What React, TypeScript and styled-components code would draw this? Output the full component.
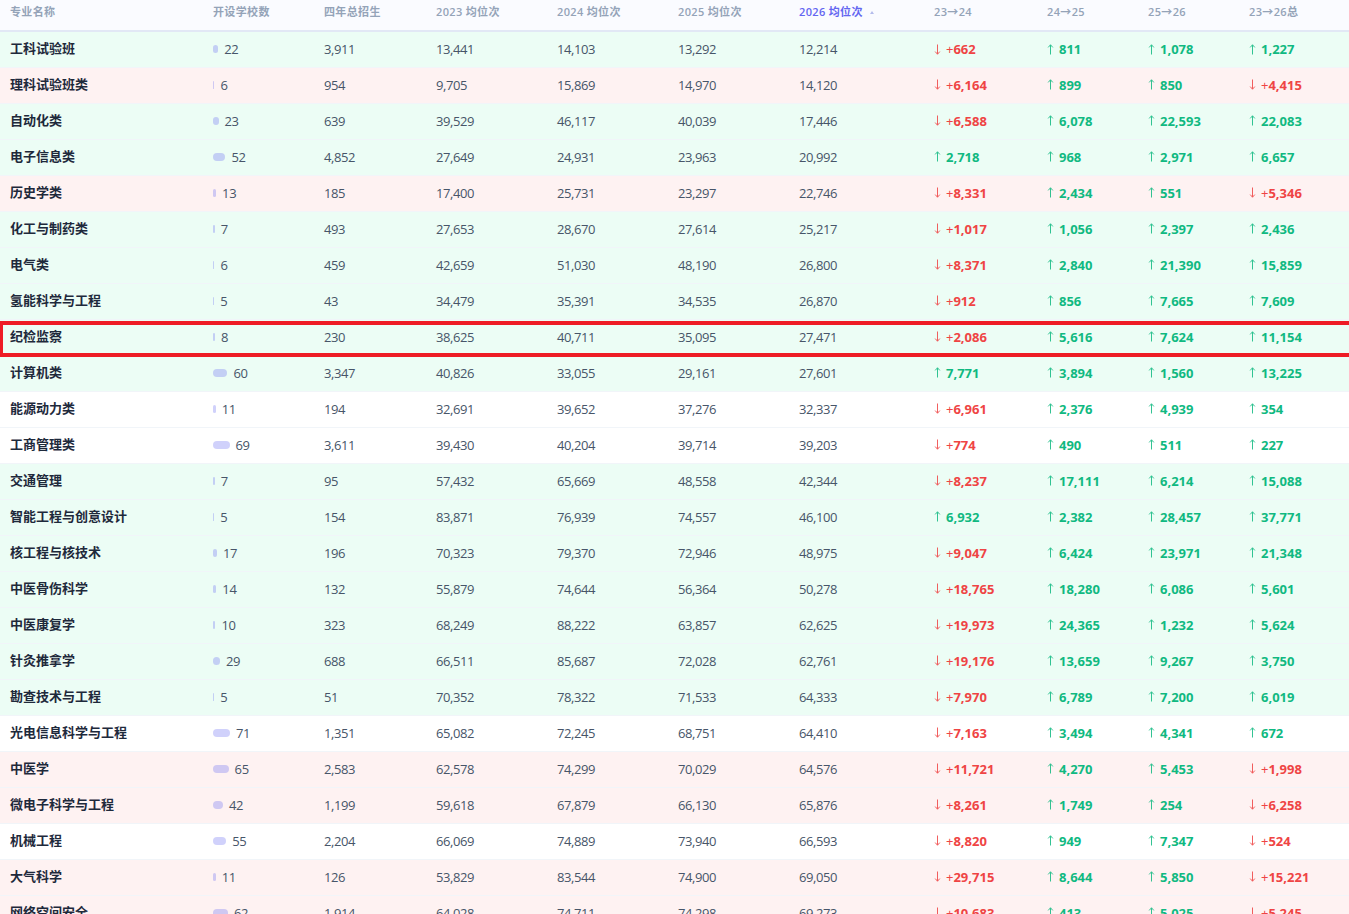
import React, { FC } from "react";
import styled, { createGlobalStyle } from "styled-components";

const GlobalStyle = createGlobalStyle`
  html, body {
    margin: 0;
    height: 100%;
    overflow: hidden;
    background: #fff;
  }
  body {
    font-family: "Open Sans", "Noto Sans CJK SC", sans-serif;
  }
`;

const Page = styled.div`
  position: relative;
`;

const Table = styled.table`
  width: 1349px;
  table-layout: fixed;
  border-collapse: collapse;
  font-size: 13px;
  line-height: 18px;
`;

const HeadRow = styled.tr`
  height: 31px;
  background: #fafbff;
  border-bottom: 2px solid #e2e8f5;
`;

const HeadCell = styled.th<{ $active?: boolean }>`
  padding: 0 10px 6px;
  text-align: left;
  font-size: 11px;
  font-weight: 600;
  letter-spacing: 0.35px;
  white-space: nowrap;
  color: ${({ $active }) => ($active ? "#6366f1" : "#94a3b8")};
`;

const SortMark = styled.span`
  display: inline-block;
  margin-left: 7px;
  vertical-align: 2px;
  border-left: 2px solid transparent;
  border-right: 2px solid transparent;
  border-bottom: 3px solid #b4bcec;
`;

const Row = styled.tr<{ $tone: "up" | "down" | "flat" }>`
  height: 36px;
  border-bottom: 1px solid #f1f5f9;
  background: ${({ $tone }) =>
    $tone === "up" ? "#ecfdf5" : $tone === "down" ? "#fef2f2" : "#ffffff"};
`;

const Cell = styled.td`
  padding: 0 10px;
  color: #475569;
  white-space: nowrap;
  letter-spacing: -0.4px;
`;

const NameCell = styled(Cell)`
  padding-bottom: 2px;
  font-weight: 600;
  color: #1e293b;
  letter-spacing: 0;
`;

const SchoolWrap = styled.div`
  display: flex;
  align-items: center;
  gap: 6px;
`;

const SchoolBar = styled.div`
  height: 8px;
  border-radius: 4px;
  background: rgba(99, 102, 241, 0.3);
`;

const Delta = styled.span<{ $up: boolean }>`
  display: inline-flex;
  align-items: center;
  font-weight: 700;
  letter-spacing: 0;
  color: ${({ $up }) => ($up ? "#10b981" : "#ef4444")};
`;

const ArrowIcon = styled.svg`
  width: 7px;
  height: 11px;
  margin-right: 5px;
  opacity: 0.85;
`;

const Plus = styled.span`
  font-weight: 400;
`;

// annotation box laid over the 纪检监察 row
const Marker = styled.div`
  position: absolute;
  left: 0;
  top: 321px;
  width: 1360px;
  height: 36px;
  box-sizing: border-box;
  border: 4px solid #ee1c25;
  border-right: none;
  border-left-width: 3px;
  pointer-events: none;
`;

type Major = [string, number, number, number, number, number, number];

const majors: Major[] = [
  ["工科试验班", 22, 3911, 13441, 14103, 13292, 12214],
  ["理科试验班类", 6, 954, 9705, 15869, 14970, 14120],
  ["自动化类", 23, 639, 39529, 46117, 40039, 17446],
  ["电子信息类", 52, 4852, 27649, 24931, 23963, 20992],
  ["历史学类", 13, 185, 17400, 25731, 23297, 22746],
  ["化工与制药类", 7, 493, 27653, 28670, 27614, 25217],
  ["电气类", 6, 459, 42659, 51030, 48190, 26800],
  ["氢能科学与工程", 5, 43, 34479, 35391, 34535, 26870],
  ["纪检监察", 8, 230, 38625, 40711, 35095, 27471],
  ["计算机类", 60, 3347, 40826, 33055, 29161, 27601],
  ["能源动力类", 11, 194, 32691, 39652, 37276, 32337],
  ["工商管理类", 69, 3611, 39430, 40204, 39714, 39203],
  ["交通管理", 7, 95, 57432, 65669, 48558, 42344],
  ["智能工程与创意设计", 5, 154, 83871, 76939, 74557, 46100],
  ["核工程与核技术", 17, 196, 70323, 79370, 72946, 48975],
  ["中医骨伤科学", 14, 132, 55879, 74644, 56364, 50278],
  ["中医康复学", 10, 323, 68249, 88222, 63857, 62625],
  ["针灸推拿学", 29, 688, 66511, 85687, 72028, 62761],
  ["勘查技术与工程", 5, 51, 70352, 78322, 71533, 64333],
  ["光电信息科学与工程", 71, 1351, 65082, 72245, 68751, 64410],
  ["中医学", 65, 2583, 62578, 74299, 70029, 64576],
  ["微电子科学与工程", 42, 1199, 59618, 67879, 66130, 65876],
  ["机械工程", 55, 2204, 66069, 74889, 73940, 66593],
  ["大气科学", 11, 126, 53829, 83544, 74900, 69050],
  ["网络空间安全", 62, 1914, 64028, 74711, 74298, 69273],
];

const columnWidths = [203, 111, 112, 121, 121, 121, 135, 113, 101, 101, 110];
const fmt = (n: number) => n.toLocaleString("en-US");

const Arrow: FC<{ up: boolean }> = ({ up }) => (
  <ArrowIcon viewBox="0 0 7 11" fill="none" stroke="currentColor" strokeWidth="1">
    {up ? <path d="M3.5 10.5V.8M1.2 3.4 3.5.8l2.3 2.6" /> : <path d="M3.5.5v9.7M1.2 7.6l2.3 2.6 2.3-2.6" />}
  </ArrowIcon>
);

const Change: FC<{ from: number; to: number }> = ({ from, to }) => {
  const diff = from - to;
  return (
    <Delta $up={diff >= 0}>
      <Arrow up={diff >= 0} />
      {diff < 0 && <Plus>+</Plus>}
      {fmt(Math.abs(diff))}
    </Delta>
  );
};

const App: FC = () => {
  return (
    <Page>
      <GlobalStyle />
      <Table>
        <colgroup>
          {columnWidths.map((w, i) => (
            <col key={i} style={{ width: w }} />
          ))}
        </colgroup>
        <thead>
          <HeadRow>
            <HeadCell>专业名称</HeadCell>
            <HeadCell>开设学校数</HeadCell>
            <HeadCell>四年总招生</HeadCell>
            <HeadCell>2023 均位次</HeadCell>
            <HeadCell>2024 均位次</HeadCell>
            <HeadCell>2025 均位次</HeadCell>
            <HeadCell $active>
              2026 均位次
              <SortMark />
            </HeadCell>
            <HeadCell>23→24</HeadCell>
            <HeadCell>24→25</HeadCell>
            <HeadCell>25→26</HeadCell>
            <HeadCell>23→26总</HeadCell>
          </HeadRow>
        </thead>
        <tbody>
          {majors.map(([name, schools, total, y23, y24, y25, y26]) => {
            const overall = y23 - y26;
            const tone = overall > 1000 ? "up" : overall < -1000 ? "down" : "flat";
            return (
              <Row key={name} $tone={tone}>
                <NameCell>{name}</NameCell>
                <Cell>
                  <SchoolWrap>
                    <SchoolBar style={{ width: schools * 0.24 }} />
                    {schools}
                  </SchoolWrap>
                </Cell>
                <Cell>{fmt(total)}</Cell>
                <Cell>{fmt(y23)}</Cell>
                <Cell>{fmt(y24)}</Cell>
                <Cell>{fmt(y25)}</Cell>
                <Cell>{fmt(y26)}</Cell>
                <Cell>
                  <Change from={y23} to={y24} />
                </Cell>
                <Cell>
                  <Change from={y24} to={y25} />
                </Cell>
                <Cell>
                  <Change from={y25} to={y26} />
                </Cell>
                <Cell>
                  <Change from={y23} to={y26} />
                </Cell>
              </Row>
            );
          })}
        </tbody>
      </Table>
      <Marker />
    </Page>
  );
};

export default App;
